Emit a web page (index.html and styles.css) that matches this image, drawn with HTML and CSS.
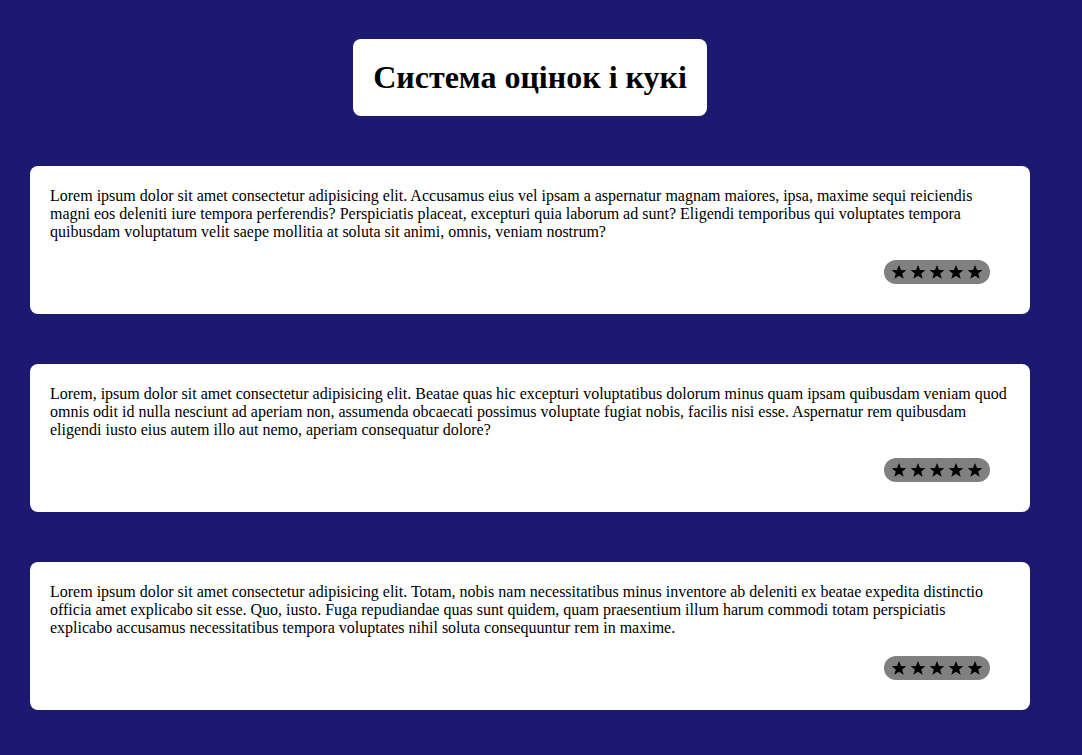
FILE: index.html
```html
<!DOCTYPE html>
<html lang="uk">
<head>
<meta charset="utf-8">
<title>Система оцінок і кукі</title>
<link rel="stylesheet" href="styles.css">
</head>
<body>
<main class="page">
  <header class="title-wrap">
    <h1 class="title">Система оцінок і кукі</h1>
  </header>
  <section class="card">
    <p class="card-text">Lorem ipsum dolor sit amet consectetur adipisicing elit. Accusamus eius vel ipsam a aspernatur magnam maiores, ipsa, maxime sequi reiciendis magni eos deleniti iure tempora perferendis? Perspiciatis placeat, excepturi quia laborum ad sunt? Eligendi temporibus qui voluptates tempora quibusdam voluptatum velit saepe mollitia at soluta sit animi, omnis, veniam nostrum?</p>
    <div class="rating">
      <svg class="star" viewBox="0 0 24 24"><polygon points="12,1.5 15,9 23,9.3 16.8,14.3 19,22.3 12,17.8 5,22.3 7.2,14.3 1,9.3 9,9"/></svg>
      <svg class="star" viewBox="0 0 24 24"><polygon points="12,1.5 15,9 23,9.3 16.8,14.3 19,22.3 12,17.8 5,22.3 7.2,14.3 1,9.3 9,9"/></svg>
      <svg class="star" viewBox="0 0 24 24"><polygon points="12,1.5 15,9 23,9.3 16.8,14.3 19,22.3 12,17.8 5,22.3 7.2,14.3 1,9.3 9,9"/></svg>
      <svg class="star" viewBox="0 0 24 24"><polygon points="12,1.5 15,9 23,9.3 16.8,14.3 19,22.3 12,17.8 5,22.3 7.2,14.3 1,9.3 9,9"/></svg>
      <svg class="star" viewBox="0 0 24 24"><polygon points="12,1.5 15,9 23,9.3 16.8,14.3 19,22.3 12,17.8 5,22.3 7.2,14.3 1,9.3 9,9"/></svg>
    </div>
  </section>
  <section class="card">
    <p class="card-text">Lorem, ipsum dolor sit amet consectetur adipisicing elit. Beatae quas hic excepturi voluptatibus dolorum minus quam ipsam quibusdam veniam quod omnis odit id nulla nesciunt ad aperiam non, assumenda obcaecati possimus voluptate fugiat nobis, facilis nisi esse. Aspernatur rem quibusdam eligendi iusto eius autem illo aut nemo, aperiam consequatur dolore?</p>
    <div class="rating">
      <svg class="star" viewBox="0 0 24 24"><polygon points="12,1.5 15,9 23,9.3 16.8,14.3 19,22.3 12,17.8 5,22.3 7.2,14.3 1,9.3 9,9"/></svg>
      <svg class="star" viewBox="0 0 24 24"><polygon points="12,1.5 15,9 23,9.3 16.8,14.3 19,22.3 12,17.8 5,22.3 7.2,14.3 1,9.3 9,9"/></svg>
      <svg class="star" viewBox="0 0 24 24"><polygon points="12,1.5 15,9 23,9.3 16.8,14.3 19,22.3 12,17.8 5,22.3 7.2,14.3 1,9.3 9,9"/></svg>
      <svg class="star" viewBox="0 0 24 24"><polygon points="12,1.5 15,9 23,9.3 16.8,14.3 19,22.3 12,17.8 5,22.3 7.2,14.3 1,9.3 9,9"/></svg>
      <svg class="star" viewBox="0 0 24 24"><polygon points="12,1.5 15,9 23,9.3 16.8,14.3 19,22.3 12,17.8 5,22.3 7.2,14.3 1,9.3 9,9"/></svg>
    </div>
  </section>
  <section class="card">
    <p class="card-text">Lorem ipsum dolor sit amet consectetur adipisicing elit. Totam, nobis nam necessitatibus minus inventore ab deleniti ex beatae expedita distinctio officia amet explicabo sit esse. Quo, iusto. Fuga repudiandae quas sunt quidem, quam praesentium illum harum commodi totam perspiciatis explicabo accusamus necessitatibus tempora voluptates nihil soluta consequuntur rem in maxime.</p>
    <div class="rating">
      <svg class="star" viewBox="0 0 24 24"><polygon points="12,1.5 15,9 23,9.3 16.8,14.3 19,22.3 12,17.8 5,22.3 7.2,14.3 1,9.3 9,9"/></svg>
      <svg class="star" viewBox="0 0 24 24"><polygon points="12,1.5 15,9 23,9.3 16.8,14.3 19,22.3 12,17.8 5,22.3 7.2,14.3 1,9.3 9,9"/></svg>
      <svg class="star" viewBox="0 0 24 24"><polygon points="12,1.5 15,9 23,9.3 16.8,14.3 19,22.3 12,17.8 5,22.3 7.2,14.3 1,9.3 9,9"/></svg>
      <svg class="star" viewBox="0 0 24 24"><polygon points="12,1.5 15,9 23,9.3 16.8,14.3 19,22.3 12,17.8 5,22.3 7.2,14.3 1,9.3 9,9"/></svg>
      <svg class="star" viewBox="0 0 24 24"><polygon points="12,1.5 15,9 23,9.3 16.8,14.3 19,22.3 12,17.8 5,22.3 7.2,14.3 1,9.3 9,9"/></svg>
    </div>
  </section>
</main>
</body>
</html>
```

FILE: styles.css
```css
html, body {
  margin: 0;
  padding: 0;
}
body {
  background: #1b1a70;
  font-family: "Liberation Serif", "Times New Roman", serif;
  color: #000;
  min-height: 755px;
}
.page {
  width: 1000px;
  margin-left: 30px;
  padding-top: 39px;
  display: flex;
  flex-direction: column;
  gap: 50px;
}
.title-wrap {
  display: flex;
  justify-content: center;
}
.title {
  margin: 0;
  background: #fff;
  border-radius: 8px;
  padding: 20px;
  font-size: 32px;
  font-weight: bold;
  line-height: 37px;
}
.card {
  background: #fff;
  border-radius: 8px;
  padding: 21px 20px 30px 20px;
  height: 97px;
  display: flex;
  flex-direction: column;
}
.card-text {
  margin: 0;
  font-size: 16px;
  line-height: 18px;
}
.rating {
  align-self: flex-end;
  margin-top: auto;
  margin-right: 20px;
  background: #808080;
  border-radius: 12px;
  height: 24px;
  width: 106px;
  box-sizing: border-box;
  padding: 0 7px;
  display: flex;
  align-items: center;
  gap: 3px;
}
.star {
  width: 16px;
  height: 16px;
  fill: #000;
  display: block;
}
```
